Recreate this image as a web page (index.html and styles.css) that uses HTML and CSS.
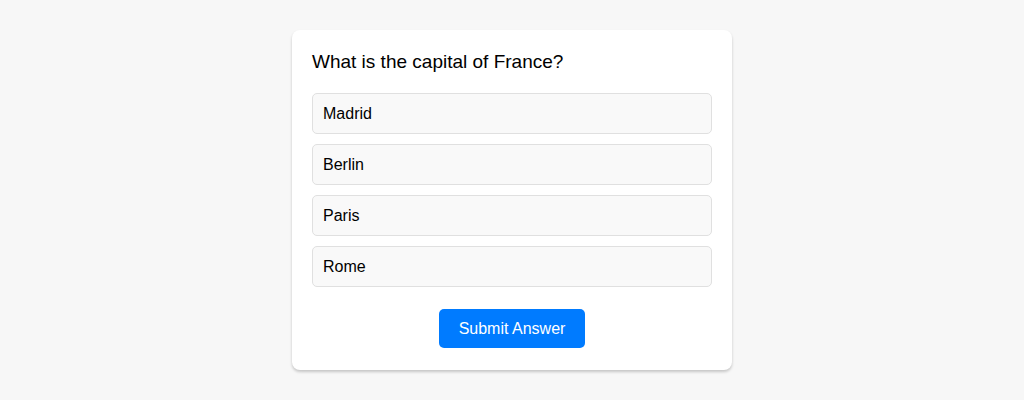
FILE: index.html
```html
<!DOCTYPE html>
<html lang="en">
<head>
<meta charset="utf-8">
<meta name="viewport" content="width=device-width, initial-scale=1">
<title>Quiz</title>
<link rel="stylesheet" href="styles.css">
</head>
<body>
<main class="quiz">
  <h1 class="question">What is the capital of France?</h1>
  <ul class="options">
    <li><button type="button" class="option">Madrid</button></li>
    <li><button type="button" class="option">Berlin</button></li>
    <li><button type="button" class="option">Paris</button></li>
    <li><button type="button" class="option">Rome</button></li>
  </ul>
  <button type="submit" class="submit">Submit Answer</button>
</main>
</body>
</html>
```

FILE: styles.css
```css
* {
  box-sizing: border-box;
}

body {
  display: flex;
  justify-content: center;
  align-items: center;
  min-height: 100vh;
  margin: 0;
  background: #f7f7f7;
  color: #000;
  font-family: "Liberation Sans", Arial, sans-serif;
}

.quiz {
  display: flex;
  flex-direction: column;
  width: 100%;
  max-width: 440px;
  padding: 20px 20px 22px;
  border-radius: 8px;
  background: #fff;
  box-shadow: 0 2px 3px rgba(0, 0, 0, 0.2);
}

.question {
  margin: 0 0 20px;
  font-size: 19px;
  font-weight: 400;
  line-height: 23px;
}

.options {
  display: grid;
  gap: 10px;
  margin: 0 0 22px;
  padding: 0;
  list-style: none;
}

.option {
  display: block;
  width: 100%;
  padding: 10px;
  border: 1px solid #e0e0e0;
  border-radius: 5px;
  background: #f9f9f9;
  color: inherit;
  font: inherit;
  font-size: 16px;
  line-height: 19px;
  text-align: left;
  cursor: pointer;
}

.option:hover {
  background: #f1f1f1;
}

.submit {
  align-self: center;
  padding: 10px 20px;
  border: 0;
  border-radius: 5px;
  background: #007bff;
  color: #fff;
  font: inherit;
  font-size: 16px;
  line-height: 19px;
  cursor: pointer;
}
```
